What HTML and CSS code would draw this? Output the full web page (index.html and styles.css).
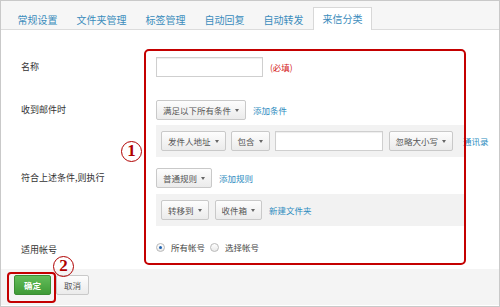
FILE: index.html
```html
<!DOCTYPE html>
<html lang="zh-CN">
<head>
    <meta charset="UTF-8">
    <title>来信分类</title>
    <link rel="stylesheet" href="styles.css">
</head>
<body>
    <div class="panel">
        <div class="tabs">
            <a class="tab">常规设置</a>
            <a class="tab">文件夹管理</a>
            <a class="tab">标签管理</a>
            <a class="tab">自动回复</a>
            <a class="tab">自动转发</a>
            <a class="tab active">来信分类</a>
        </div>

        <div class="form">
            <div class="row row-name">
                <div class="label">名称</div>
                <div class="field">
                    <div class="line">
                        <input type="text" class="text-input name-input">
                        <span class="required">(必填)</span>
                    </div>
                </div>
            </div>

            <div class="row row-cond">
                <div class="label">收到邮件时</div>
                <div class="field">
                    <div class="line">
                        <span class="btn dropdown">满足以下所有条件</span>
                        <a class="link">添加条件</a>
                    </div>
                    <div class="box">
                        <span class="btn dropdown">发件人地址</span>
                        <span class="btn dropdown">包含</span>
                        <input type="text" class="text-input cond-input">
                        <span class="btn dropdown">忽略大小写</span>
                        <a class="link contacts">通讯录</a>
                    </div>
                </div>
            </div>

            <div class="row row-action">
                <div class="label">符合上述条件,则执行</div>
                <div class="field">
                    <div class="line">
                        <span class="btn dropdown">普通规则</span>
                        <a class="link">添加规则</a>
                    </div>
                    <div class="box box-action">
                        <span class="btn dropdown">转移到</span>
                        <span class="btn dropdown">收件箱</span>
                        <a class="link">新建文件夹</a>
                    </div>
                </div>
            </div>

            <div class="row row-account">
                <div class="label">适用帐号</div>
                <div class="field">
                    <div class="line radios">
                        <span class="radio checked"></span><span class="radio-text">所有帐号</span>
                        <span class="radio"></span><span class="radio-text">选择帐号</span>
                    </div>
                </div>
            </div>
        </div>

        <div class="footer">
            <span class="btn btn-ok">确定</span>
            <span class="btn btn-cancel">取消</span>
        </div>

        <!-- annotations drawn over the page -->
        <div class="mark mark-form"></div>
        <div class="mark mark-ok"></div>
        <div class="num num-1">1</div>
        <div class="num num-2">2</div>
    </div>
</body>
</html>
```

FILE: styles.css
```css
body {
    margin: 0;
    font-family: "Noto Sans CJK SC", "Noto Sans", sans-serif;
    font-size: 9px;
    color: #333;
}

.panel {
    position: relative;
    width: 500px;
    height: 307px;
    box-sizing: border-box;
    border: 1px solid #c9c9c9;
    background-color: #fff;
    overflow: hidden;
}

/* tabs */
.tabs {
    display: flex;
    align-items: flex-end;
    height: 28px;
    padding-left: 7px;
    background-color: #f6f6f6;
    border-bottom: 1px solid #dcdcdc;
}

.tab {
    height: 21px;
    line-height: 21px;
    padding: 0 8.5px;
    margin-bottom: -1px;
    border: 1px solid transparent;
    border-bottom: none;
    font-size: 10px;
    color: #3a8cbc;
    white-space: nowrap;
}

.tab.active {
    background-color: #fff;
    border-color: #d8d8d8;
    height: 22px;
}

/* form */
.form {
    height: 239px;
    padding-top: 27px;
    box-sizing: border-box;
}

.row {
    display: flex;
    align-items: flex-start;
}

.label {
    width: 135px;
    padding-left: 20px;
    line-height: 20px;
    font-size: 9px;
    color: #333;
    flex-shrink: 0;
}

.field {
    display: flex;
    flex-direction: column;
}

.line {
    display: flex;
    align-items: center;
    height: 20px;
}

.row-cond {
    margin-top: 23px;
}

.row-action {
    margin-top: 11px;
}

.row-account {
    margin-top: 14px;
}

.text-input {
    height: 20px;
    box-sizing: border-box;
    border: 1px solid #cfcfcf;
    box-shadow: inset 0 1px 1px #eee;
    margin: 0;
    padding: 0 4px;
    flex-shrink: 0;
}

.name-input {
    width: 107px;
}

.cond-input {
    width: 108px;
    margin-left: 5px;
}

.required {
    margin-left: 7px;
    font-size: 8.5px;
    color: #d42020;
}

.btn {
    display: inline-flex;
    align-items: center;
    height: 20px;
    box-sizing: border-box;
    padding: 0 6px;
    border: 1px solid #c9c9c9;
    border-radius: 2px;
    background: linear-gradient(#fdfdfd, #ebebeb);
    font-size: 8.5px;
    color: #555;
    white-space: nowrap;
    flex-shrink: 0;
}

.dropdown::after {
    content: "";
    margin-left: 4px;
    border-left: 2.5px solid transparent;
    border-right: 2.5px solid transparent;
    border-top: 3px solid #666;
}

.link {
    margin-left: 7px;
    font-size: 8.5px;
    color: #2d8cc0;
    white-space: nowrap;
    flex-shrink: 0;
}

.box {
    display: flex;
    align-items: center;
    width: 308px;
    height: 32px;
    margin-top: 5px;
    padding-left: 5px;
    box-sizing: border-box;
    background-color: #f2f2f2;
}

.box .btn + .btn {
    margin-left: 5px;
}

.box .cond-input + .btn {
    margin-left: 6px;
}

.box .contacts {
    margin-left: 10px;
}

.box-action {
    margin-top: 6px;
}

.box-action .btn + .btn {
    margin-left: 6px;
}

.radios {
    height: 14px;
    font-size: 8.5px;
    color: #444;
}

.radio {
    position: relative;
    width: 9px;
    height: 9px;
    box-sizing: border-box;
    border: 1px solid #b9b9b9;
    border-radius: 50%;
    background: linear-gradient(#fff, #e9e9e9);
}

.radio.checked::after {
    content: "";
    position: absolute;
    left: 2px;
    top: 2px;
    width: 3px;
    height: 3px;
    border-radius: 50%;
    background-color: #1f62b0;
}

.radio-text {
    margin-left: 6px;
    margin-right: 5px;
}

/* footer */
.footer {
    display: flex;
    align-items: flex-start;
    gap: 5px;
    height: 36px;
    padding: 6px 0 0 13px;
    box-sizing: border-box;
    background-color: #f4f4f4;
}

.btn-ok {
    padding: 0 9px;
    border-color: #3b8d34;
    background: linear-gradient(#63bd5a, #3f9b37);
    color: #fff;
    font-weight: bold;
}

.btn-cancel {
    padding: 0 7px;
}

/* red annotations */
.mark {
    position: absolute;
    box-sizing: border-box;
    border: 2px solid #c40000;
}

.mark-form {
    left: 143px;
    top: 48px;
    width: 322px;
    height: 216px;
    border-radius: 5px;
}

.mark-ok {
    left: 6px;
    top: 271px;
    width: 49px;
    height: 31px;
    border-radius: 4px;
}

.num {
    position: absolute;
    width: 21px;
    height: 21px;
    box-sizing: border-box;
    border: 1.5px solid #b00000;
    border-radius: 50%;
    font-family: "Liberation Serif", serif;
    font-size: 17px;
    font-weight: bold;
    line-height: 18px;
    text-align: center;
    color: #b00000;
}

.num-1 {
    left: 120px;
    top: 140px;
}

.num-2 {
    left: 52px;
    top: 255px;
}
```
